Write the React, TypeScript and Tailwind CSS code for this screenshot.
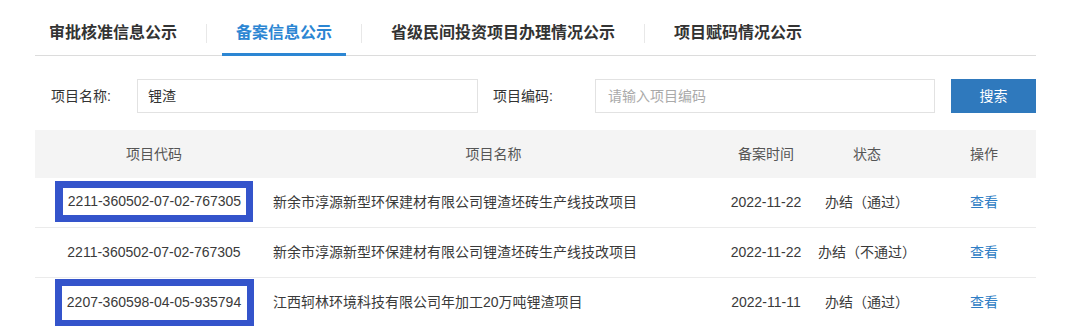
const font = "font-['Liberation_Sans','Noto_Sans_CJK_SC',sans-serif]";

const tabs = ["审批核准信息公示", "备案信息公示", "省级民间投资项目办理情况公示", "项目赋码情况公示"];

interface Row {
  code: string;
  name: string;
  date: string;
  status: string;
  marked: "none" | "top" | "bottom";
}

const rows: Row[] = [
  {
    code: "2211-360502-07-02-767305",
    name: "新余市淳源新型环保建材有限公司锂渣坯砖生产线技改项目",
    date: "2022-11-22",
    status: "办结（通过）",
    marked: "top",
  },
  {
    code: "2211-360502-07-02-767305",
    name: "新余市淳源新型环保建材有限公司锂渣坯砖生产线技改项目",
    date: "2022-11-22",
    status: "办结（不通过）",
    marked: "none",
  },
  {
    code: "2207-360598-04-05-935794",
    name: "江西轲林环境科技有限公司年加工20万吨锂渣项目",
    date: "2022-11-11",
    status: "办结（通过）",
    marked: "bottom",
  },
];

function CodeCell({ row }: { row: Row }) {
  if (row.marked === "top") {
    return (
      <span className="-mt-[3px] inline-flex items-center justify-center w-[198px] h-[41px] border-[7px] border-l-[8px] border-[#3454cb] bg-white">
        {row.code}
      </span>
    );
  }
  if (row.marked === "bottom") {
    return (
      <span className="inline-flex items-center justify-center w-[199px] h-[48px] border-[7px] border-[#3454cb] bg-white">
        {row.code}
      </span>
    );
  }
  return <span>{row.code}</span>;
}

export default function App() {
  return (
    <div className={`w-[1080px] h-[326px] overflow-hidden bg-white ${font}`}>
      <div className="ml-[35px] w-[1001px]">
        {/* 标签页 */}
        <div className="flex h-[56px] border-b border-[#dcdcdc]">
          {tabs.map((t, i) => (
            <div key={t} className="flex">
              {i > 0 && <div className="self-start mt-[24px] h-[19px] w-px bg-[#e8e8e8] mx-[15px]" />}
              <div
                className={`-mb-px flex items-start pt-[22px] px-[14px] border-b-[3px] text-[16px] leading-[22px] font-bold ${
                  i === 1 ? "border-[#2c86d3] text-[#2c86d3]" : "border-transparent text-[#333]"
                }`}
              >
                {t}
              </div>
            </div>
          ))}
        </div>

        {/* 搜索栏 */}
        <div className="mt-[23px] flex h-[34px] items-center text-[14px] text-[#333]">
          <span className="pl-[16px] w-[102px]">项目名称:</span>
          <div className="h-full w-[341px] border border-[#e2e2e2] flex items-center px-[10px]">锂渣</div>
          <span className="ml-[15px] w-[102px]">项目编码:</span>
          <div className="h-full w-[340px] border border-[#e2e2e2] flex items-center px-[12px] text-[#aaa]">
            请输入项目编码
          </div>
          <button className="ml-[16px] h-full w-[85px] bg-[#2f79bd] text-white text-[14px]">搜索</button>
        </div>

        {/* 表格 */}
        <div className="mt-[17px] text-[14px]">
          <div className="grid grid-cols-[238px_441px_104px_98px_120px] h-[48px] items-center bg-[#f4f4f4] text-[#555]">
            <span className="text-center">项目代码</span>
            <span className="text-center">项目名称</span>
            <span className="text-center">备案时间</span>
            <span className="text-center">状态</span>
            <span className="text-center pl-[16px]">操作</span>
          </div>
          {rows.map((r, i) => (
            <div
              key={i}
              className="grid grid-cols-[238px_441px_104px_98px_120px] h-[50px] items-center border-b border-[#ebebeb] text-[#3a3a3a]"
            >
              <div className="flex justify-center">
                <CodeCell row={r} />
              </div>
              <span className="whitespace-nowrap">{r.name}</span>
              <span className="text-center">{r.date}</span>
              <span className="text-center whitespace-nowrap">{r.status}</span>
              <span className="text-center pl-[16px] text-[#2f7dc4]">查看</span>
            </div>
          ))}
        </div>
      </div>
    </div>
  );
}
